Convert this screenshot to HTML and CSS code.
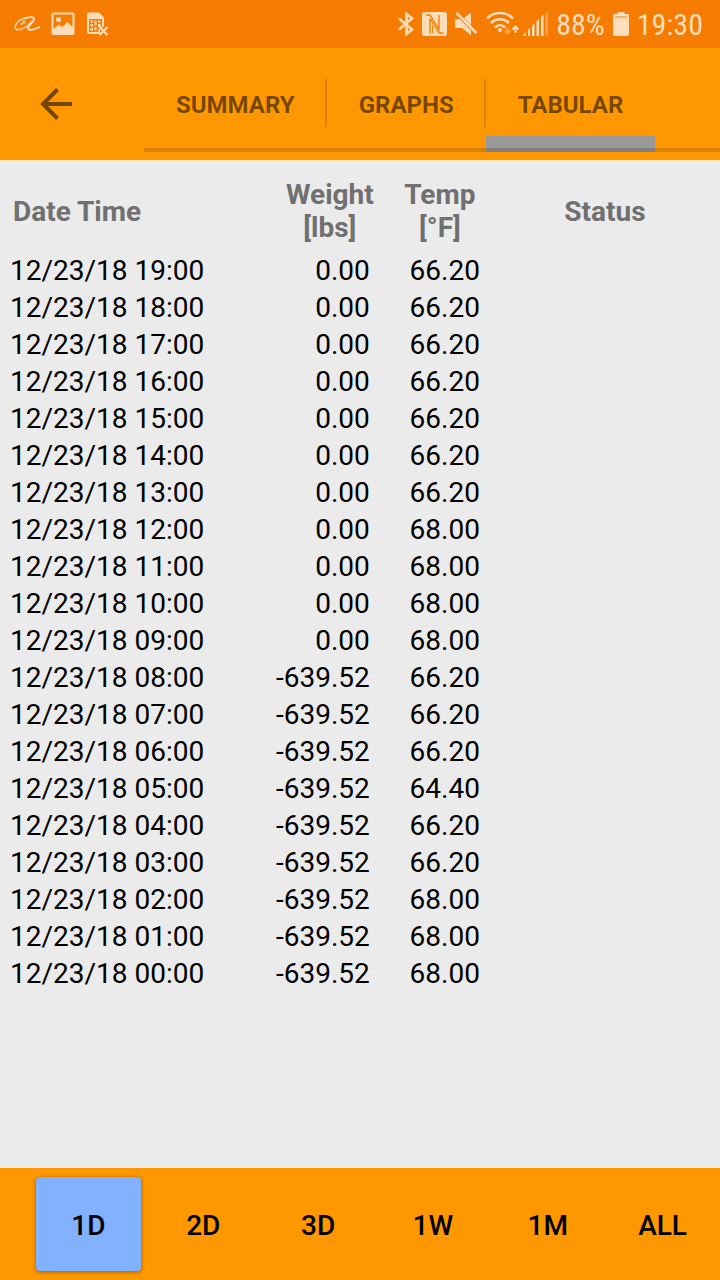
FILE: index.html
```html
<!DOCTYPE html>
<html lang="en">
<head>
  <meta charset="UTF-8">
  <meta name="viewport" content="width=device-width, initial-scale=1.0">
  <title>Tabular</title>
  <link rel="stylesheet" href="styles.css">
</head>
<body>

<div class="status-bar">
  <div class="status-left">
    <svg width="26" height="24" viewBox="0 0 26 24" fill="none" stroke="currentColor" stroke-linecap="round">
      <path d="M7 12C9.500 12 11 11 10.500 9.500L8.500 9.500" stroke-width="1.300"/>
      <path d="M12 6C6 7 1 11.500 1 15C1 18.500 6 18.500 11 15.500C14 13.500 16 11.500 18 9.500" stroke-width="1.400"/>
      <path d="M12 6C17 4.500 20.500 5 20 7.500C19.500 10 14.500 13 14 16C14 19 20 18 25.500 15" stroke-width="1.900"/>
    </svg>
    <svg width="24" height="24" viewBox="0 0 24 24">
      <path fill="currentColor" fill-rule="evenodd" d="M2.500 .5h19a2 2 0 0 1 2 2v18.500a2 2 0 0 1-2 2h-19a2 2 0 0 1-2-2V2.500a2 2 0 0 1 2-2zM2.500 2.500V17L8 12.500l3 2.500 5.500-5 5 5V2.500z"/>
      <circle cx="7.500" cy="7.500" r="2.500" fill="currentColor"/>
    </svg>
    <svg width="23" height="24" viewBox="0 0 23 24">
      <path fill="currentColor" fill-rule="evenodd" d="M3 .5h10l5 5V14l-3.500 3-1 2 1 3H3a2 2 0 0 1-2-2V2.500a2 2 0 0 1 2-2zM3 7v13h9v-2l2-1 2-3V7zM4.500 8.500H7v2H4.500zM4.500 12H7v2.500H4.500zM4.500 16H7v2.500H4.500zM8.500 8.500h2v5h-2zM8.500 15h2v3.500h-2zM12 8.500h2.500v2H12zM12 12h2.500v3H12z"/>
      <path d="M13.500 15l8 8M21.500 15l-8 8" stroke="currentColor" stroke-width="2.200"/>
    </svg>
  </div>
  <div class="status-right">
    <svg width="16" height="24" viewBox="0 0 16 24" fill="none" stroke="currentColor" stroke-width="2.600">
      <path d="M1 6.500l13 11L8.500 22V2L14 6.500l-13 11"/>
    </svg>
    <svg width="25" height="24" viewBox="0 0 25 24">
      <rect width="25" height="24" rx="3" fill="currentColor"/>
      <path d="M4 3h4l9 14.500V3M8 6.500V21h-.5M21 21h-4L8 6.500" fill="none" stroke="#f57c00" stroke-width="1.400"/>
      <path d="M10.500 13v8" fill="none" stroke="#f57c00" stroke-width="1"/>
    </svg>
    <svg width="23" height="24" viewBox="0 0 23 24">
      <path d="M0 7h4.500L16 18.500V23L7 16H0zM9 6l7-5.500v12.500z" fill="currentColor"/>
      <path d="M1.500 1l20 20" stroke="currentColor" stroke-width="2.500"/>
    </svg>
    <div class="signal">
      <svg width="33" height="24" viewBox="0 0 33 24" fill="none" stroke="currentColor" stroke-width="2.500">
        <path d="M1 6.500C8-.8 20-.8 27 6.500M5 11c5-5 13-5 18 0M9 15.500c3-3 7-3 10 0"/>
        <circle cx="14" cy="18" r="2" fill="currentColor" stroke="none"/>
        <path class="faded" d="M21.500 15v6M18.500 18.500l3 3 3-3" stroke-width="2"/>
        <path d="M29.500 21v-6M26.500 17.500l3-3 3 3" stroke-width="2"/>
      </svg>
      <svg width="25" height="24" viewBox="0 0 25 24" fill="currentColor">
        <path d="M0 24v-1l3-3v4zM5 24v-6l2-2v8zM9 24V14l2.500-2.500V24zM13.500 24V9.500L16 7v17zM18 24V5l2.500-2.500V24z"/>
        <path class="faded" d="M22.500 24V1L25 0v24z"/>
      </svg>
    </div>
    <span class="status-text">88%</span>
    <svg width="16" height="24" viewBox="0 0 16 24">
      <path d="M4.500 0h7v2H15a1 1 0 0 1 1 1v20a1 1 0 0 1-1 1H1a1 1 0 0 1-1-1V3a1 1 0 0 1 1-1h3.500z" fill="currentColor"/>
      <path d="M2 5h12" stroke="#f9a14b" stroke-width="1.500"/>
    </svg>
    <span class="status-text">19:30</span>
  </div>
</div>

<header class="app-bar">
  <button class="back" aria-label="Back">
    <svg width="32" height="32" viewBox="0 0 32 32" fill="none" stroke="currentColor" stroke-width="4">
      <path d="M32 16H3M17.500 1.500L3 16l14.500 14.500"/>
    </svg>
  </button>
  <nav class="tabs">
    <button class="tab">SUMMARY</button>
    <button class="tab">GRAPHS</button>
    <button class="tab active">TABULAR</button>
  </nav>
</header>

<main class="content">
  <table class="readings">
    <thead>
      <tr>
        <th class="date">Date Time</th>
        <th class="value">Weight<br>[lbs]</th>
        <th class="value">Temp<br>[°F]</th>
        <th>Status</th>
      </tr>
    </thead>
    <tbody>
      <tr><td>12/23/18 19:00</td><td>0.00</td><td>66.20</td><td></td></tr>
      <tr><td>12/23/18 18:00</td><td>0.00</td><td>66.20</td><td></td></tr>
      <tr><td>12/23/18 17:00</td><td>0.00</td><td>66.20</td><td></td></tr>
      <tr><td>12/23/18 16:00</td><td>0.00</td><td>66.20</td><td></td></tr>
      <tr><td>12/23/18 15:00</td><td>0.00</td><td>66.20</td><td></td></tr>
      <tr><td>12/23/18 14:00</td><td>0.00</td><td>66.20</td><td></td></tr>
      <tr><td>12/23/18 13:00</td><td>0.00</td><td>66.20</td><td></td></tr>
      <tr><td>12/23/18 12:00</td><td>0.00</td><td>68.00</td><td></td></tr>
      <tr><td>12/23/18 11:00</td><td>0.00</td><td>68.00</td><td></td></tr>
      <tr><td>12/23/18 10:00</td><td>0.00</td><td>68.00</td><td></td></tr>
      <tr><td>12/23/18 09:00</td><td>0.00</td><td>68.00</td><td></td></tr>
      <tr><td>12/23/18 08:00</td><td>-639.52</td><td>66.20</td><td></td></tr>
      <tr><td>12/23/18 07:00</td><td>-639.52</td><td>66.20</td><td></td></tr>
      <tr><td>12/23/18 06:00</td><td>-639.52</td><td>66.20</td><td></td></tr>
      <tr><td>12/23/18 05:00</td><td>-639.52</td><td>64.40</td><td></td></tr>
      <tr><td>12/23/18 04:00</td><td>-639.52</td><td>66.20</td><td></td></tr>
      <tr><td>12/23/18 03:00</td><td>-639.52</td><td>66.20</td><td></td></tr>
      <tr><td>12/23/18 02:00</td><td>-639.52</td><td>68.00</td><td></td></tr>
      <tr><td>12/23/18 01:00</td><td>-639.52</td><td>68.00</td><td></td></tr>
      <tr><td>12/23/18 00:00</td><td>-639.52</td><td>68.00</td><td></td></tr>
    </tbody>
  </table>
</main>

<footer class="range-bar">
  <button class="range selected">1D</button>
  <button class="range">2D</button>
  <button class="range">3D</button>
  <button class="range">1W</button>
  <button class="range">1M</button>
  <button class="range">ALL</button>
</footer>

</body>
</html>
```

FILE: styles.css
```css
:root {
  --primary: #ff9800;
  --primary-dark: #f57c00;
  --bar-text: rgba(0, 0, 0, 0.54);
  --line: rgba(0, 0, 0, 0.15);
}

* {
  box-sizing: border-box;
}

body {
  margin: 0;
  min-height: 100vh;
  display: flex;
  flex-direction: column;
  background: #ebebeb;
  color: #000;
  font-family: Roboto, sans-serif;
  font-size: 28px;
}

button {
  padding: 0;
  border: none;
  background: none;
  color: inherit;
  font: inherit;
  cursor: pointer;
}

svg {
  display: block;
  flex: none;
}

/* status bar */
.status-bar {
  display: flex;
  justify-content: space-between;
  align-items: center;
  height: 48px;
  padding: 0 17px 0 14px;
  background: var(--primary-dark);
  color: #ffddbb;
}

.status-left,
.status-right,
.signal {
  display: flex;
  align-items: center;
}

.status-left {
  gap: 11px;
}

.status-right {
  gap: 8px;
}

.signal {
  gap: 4px;
}

.status-text {
  font-family: "Roboto Condensed", Roboto, sans-serif;
  font-size: 30px;
  line-height: 48px;
  padding-top: 1px;
}

.faded {
  opacity: 0.4;
}

/* app bar */
.app-bar {
  display: flex;
  padding: 8px 0;
  background: var(--primary);
  color: var(--bar-text);
}

.back {
  display: flex;
  align-items: center;
  width: 144px;
  padding-left: 40px;
}

.tabs {
  position: relative;
  flex: 1;
  display: flex;
  height: 96px;
}

/* track runs over the active tab's indicator */
.tabs::after {
  content: "";
  position: absolute;
  left: 0;
  right: 0;
  bottom: 0;
  height: 4px;
  background: var(--line);
}

.tab {
  position: relative;
  padding: 2px 32px 0;
  font-size: 24px;
  font-weight: bold;
}

.tab + .tab::before {
  content: "";
  position: absolute;
  left: -2px;
  top: 23px;
  width: 2px;
  height: 48px;
  background: var(--line);
}

.tab.active {
  box-shadow: inset 0 -16px #999;
}

/* readings */
.content {
  flex: 1;
  padding: 17px 5px;
  border-top: 1px solid #ffe5b8;
}

.readings {
  width: 100%;
  table-layout: fixed;
  border-collapse: collapse;
}

.readings th {
  height: 74px;
  padding: 0 0 8px;
  color: #707070;
  line-height: 33px;
}

.readings td {
  height: 37px;
  padding: 0 15px 0 0;
  line-height: 37px;
  text-align: right;
}

.readings td:first-child {
  padding: 0 0 0 5px;
  text-align: left;
}

.readings .date {
  width: 38%;
  padding-left: 8px;
  text-align: left;
}

.value {
  width: 15.5%;
}

/* range buttons */
.range-bar {
  display: flex;
  height: 112px;
  padding: 9px 0 9px 31px;
  background: var(--primary);
}

.range {
  flex: 1;
  margin: 0 5px;
  padding-top: 2px;
  border-radius: 4px;
  font-weight: 500;
}

.range.selected {
  background: #82b1ff;
  box-shadow: 0 1px 4px rgba(0, 0, 0, 0.4);
}
```
